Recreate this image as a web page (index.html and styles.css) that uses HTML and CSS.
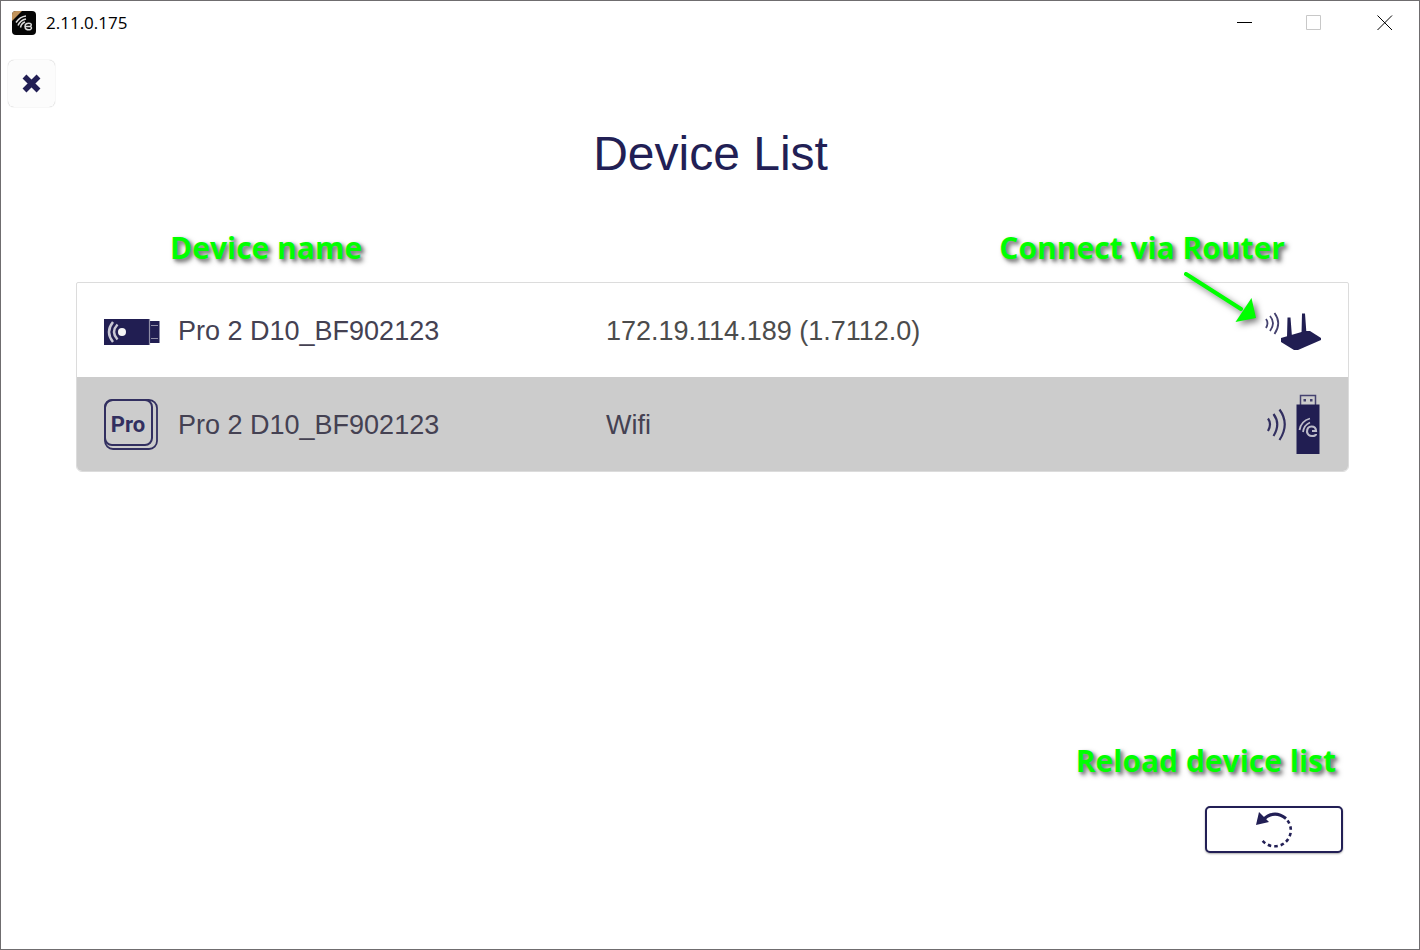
FILE: index.html
```html
<!DOCTYPE html>
<html lang="en">
<head>
<meta charset="utf-8">
<meta name="viewport" content="width=device-width, initial-scale=1">
<title>2.11.0.175</title>
<link rel="stylesheet" href="styles.css">
</head>
<body>
<div class="window">
  <header class="titlebar">
    <svg class="app-icon" viewBox="0 0 24 24" aria-hidden="true">
      <rect width="24" height="24" rx="4" fill="#050505"/>
      <path d="M4 0H10L0 10V4Q0 0 4 0Z" fill="#c1935a"/>
      <g fill="none" stroke="#ddd" stroke-width="1.500">
        <path d="M4 11.500Q8 5.500 14 5"/>
        <path d="M6 14.500Q8.500 9 14 8"/>
        <path d="M8.500 16.500Q9.500 12 13 11"/>
        <path d="M12.500 15.500H18.500M18.500 12.500Q13 11.500 13 15.500T18.500 18.500Q20.500 17 18.500 15.500Q20 13.500 18.500 12.500"/>
      </g>
    </svg>
    <span class="version">2.11.0.175</span>
    <div class="controls">
      <button class="control" type="button" aria-label="Minimize"><svg viewBox="0 0 16 16"><path d="M1 7.500H16" stroke="#000"/></svg></button>
      <button class="control" type="button" aria-label="Maximize" disabled><svg viewBox="0 0 16 16"><path d="M.5.500H14.500V14.500H.5Z" fill="none" stroke="#c8c8c8"/></svg></button>
      <button class="control" type="button" aria-label="Close"><svg viewBox="0 0 16 16"><path d="M1.500.500L16 15M16 .5L1.500 15" stroke="#000"/></svg></button>
    </div>
  </header>
  <div class="toolbar">
    <button class="dismiss" type="button" aria-label="Close device list">
      <svg viewBox="0 0 20 20"><path d="M2.500 2.500L16.500 16.500M16.500 2.500L2.500 16.500" stroke="#221f55" stroke-width="5.500"/></svg>
    </button>
  </div>
  <main class="content">
    <h1 class="title">Device List</h1>
    <div class="notes">
      <span class="note">Device name</span>
      <span class="note">Connect via Router
        <svg class="arrow" viewBox="0 0 80 60" aria-hidden="true">
          <path d="M5 6L60 41" stroke="#0f0" stroke-width="4" stroke-linecap="round"/>
          <path d="M75 50L70.500 30L54.500 54Z" fill="#0f0"/>
        </svg>
      </span>
    </div>
    <div class="frame">
      <table class="devices">
        <tbody>
          <tr class="device">
            <td class="kind">
              <svg class="icon" viewBox="0 0 60 60" aria-hidden="true">
                <rect x="3" y="18" width="45" height="26" fill="#211e52"/>
                <path d="M48 20H58.500V42H48Z" fill="#211e52"/>
                <path d="M48.500 18V44M50 24.500H57M50 37.500H57" stroke="#8f8da6" stroke-width="1.200"/>
                <circle cx="21" cy="31" r="4" fill="#f5f5f5"/>
                <path d="M12 21Q4 31 12 41M16.500 23.500Q9.500 31 16.500 38.500" fill="none" stroke="#c9c8d4" stroke-width="2.500"/>
              </svg>
            </td>
            <td class="name">Pro 2 D10_BF902123</td>
            <td class="address">172.19.114.189 (1.7112.0)</td>
            <td class="link">
              <svg class="icon" viewBox="0 0 60 60" aria-label="Router" role="img">
                <g fill="none" stroke="#45426f" stroke-width="1.800">
                  <path d="M4 18Q7 22 4 27M8 15Q14 22 8 30M12.500 12Q20 22 12.500 33"/>
                </g>
                <g fill="#211e52">
                  <path d="M19 37L43 30H48L59 37V39L36 49H32L19 41Z"/>
                  <path d="M25.500 16.500H28.500L30 36H25ZM40 12.500H43L44.500 33H39.500Z"/>
                </g>
              </svg>
            </td>
          </tr>
          <tr class="device selected">
            <td class="kind">
              <svg class="icon" viewBox="0 0 60 60" aria-hidden="true">
                <g fill="none" stroke="#322f60">
                  <rect x="4" y="5" width="52" height="49" rx="8" stroke-width="1.800"/>
                  <rect x="4" y="5" width="47" height="45" rx="7" stroke-width="2"/>
                </g>
                <text class="badge" x="27" y="37">Pro</text>
              </svg>
            </td>
            <td class="name">Pro 2 D10_BF902123</td>
            <td class="address wifi">Wifi</td>
            <td class="link">
              <svg class="icon" viewBox="0 0 60 60" aria-label="USB dongle" role="img">
                <g fill="none" stroke="#322f60" stroke-width="2.200">
                  <path d="M6 23.500Q10 29 6 36M11.500 19Q19 29 11.500 41M17.500 14.500Q28 29 17.500 45"/>
                </g>
                <path d="M38.500 10V.5H53.500V10" fill="none" stroke="#45426f" stroke-width="1.500"/>
                <path d="M41.500 4H44V6.500H41.500ZM48 4H50.500V6.500H48Z" fill="#45426f"/>
                <rect x="34.500" y="9.500" width="23" height="49.500" fill="#211e52"/>
                <g fill="none" stroke="#bdbcca" stroke-width="1.800">
                  <path d="M37.500 35Q39 26 48 23.500M41 37Q42 30 48 27.500"/>
                  <path d="M50 36H54Q54 31.500 49.500 31.500T45 37Q46 41 50 41T54 39" stroke-width="2.200"/>
                </g>
              </svg>
            </td>
          </tr>
        </tbody>
      </table>
    </div>
  </main>
  <footer class="footer">
    <label class="note reload-note" for="reload">Reload device list</label>
    <button class="reload" id="reload" type="button">
      <svg viewBox="0 0 38 36" aria-hidden="true">
        <g fill="none" stroke="#221f55" stroke-width="2.600">
          <path d="M8 8Q19-3 31 6.500" stroke-width="3"/>
          <path d="M32.500 8.500A16 16 0 0 1 7 28" stroke-dasharray="3.500 3"/>
        </g>
        <path d="M4 0L1 13L14 10Z" fill="#221f55"/>
      </svg>
    </button>
  </footer>
</div>
</body>
</html>
```
FILE: styles.css
```css
* { box-sizing: border-box; }

body {
  margin: 0;
  background: #fff;
  color: #221f55;
  font-family: "Liberation Sans", Arial, sans-serif;
}

button {
  padding: 0;
  border: 0;
  background: none;
}

svg {
  display: block;
  overflow: visible;
}

.window {
  display: flex;
  flex-direction: column;
  min-height: 100vh;
  border: 1px solid #6f6d6f;
}

.titlebar {
  display: flex;
  align-items: center;
  height: 44px;
  padding-left: 11px;
}

.app-icon {
  width: 24px;
  height: 24px;
}

.version {
  margin-left: 10px;
  color: #000;
  font: 17px/24px "Open Sans", "Noto Sans", sans-serif;
}

.controls {
  display: flex;
  align-self: stretch;
  margin-left: auto;
}

.control {
  display: grid;
  place-items: center;
  width: 70px;
}

.control svg {
  width: 16px;
  height: 16px;
}

.toolbar {
  padding: 15px 7px 0;
}

.dismiss {
  display: grid;
  place-items: center;
  width: 47px;
  height: 47px;
  border-radius: 6px;
  background: #fcfcfc;
  box-shadow: 0 0 1px #aaa;
}

.dismiss svg {
  width: 20px;
  height: 20px;
}

.content {
  padding: 19px 70px 0 75px;
}

.title {
  margin: 0 4px 0 0;
  font-size: 48px;
  font-weight: 400;
  line-height: 56px;
  text-align: center;
}

.notes {
  display: flex;
  justify-content: space-between;
  margin-top: 44px;
  padding: 0 64px 0 94px;
}

.note {
  position: relative;
  color: #0f0;
  font: 700 30px/44px "Open Sans", "Noto Sans", sans-serif;
  text-shadow: 3px 3px 5px #777, 2px 2px 3px #aaa;
}

.arrow {
  position: absolute;
  top: 42px;
  right: 24px;
  width: 80px;
  height: 60px;
  filter: drop-shadow(3px 3px 3px #777);
}

.frame {
  margin-top: 12px;
  overflow: hidden;
  border: 1px solid #dcdcdc;
  border-radius: 2px 2px 6px 6px;
}

.devices {
  width: 100%;
  border-collapse: collapse;
  table-layout: fixed;
}

.device {
  height: 94px;
}

.selected {
  background: #ccc;
}

.devices td {
  padding: 2px 0 0;
  font-size: 27px;
  vertical-align: middle;
}

.devices .kind {
  width: 101px;
  padding-left: 24px;
}

.name {
  width: 428px;
  color: #444152;
}

.address {
  color: #4c4c4c;
}

.wifi {
  color: #444152;
}

.devices .link {
  width: 86px;
}

.icon {
  width: 60px;
  height: 60px;
}

.badge {
  fill: #322f60;
  font: 700 22px Roboto, sans-serif;
  text-anchor: middle;
}

.footer {
  display: flex;
  flex-direction: column;
  align-items: flex-end;
  margin-top: auto;
  padding: 24px 76px 96px;
}

.reload-note {
  margin-right: 7px;
}

.reload {
  display: grid;
  place-items: center;
  width: 138px;
  height: 47px;
  margin-top: 23px;
  border: 2px solid #221f55;
  border-radius: 5px;
  background: #fff;
  box-shadow: 0 1px 2px #aaa;
}

.reload svg {
  width: 38px;
  height: 36px;
}
```
